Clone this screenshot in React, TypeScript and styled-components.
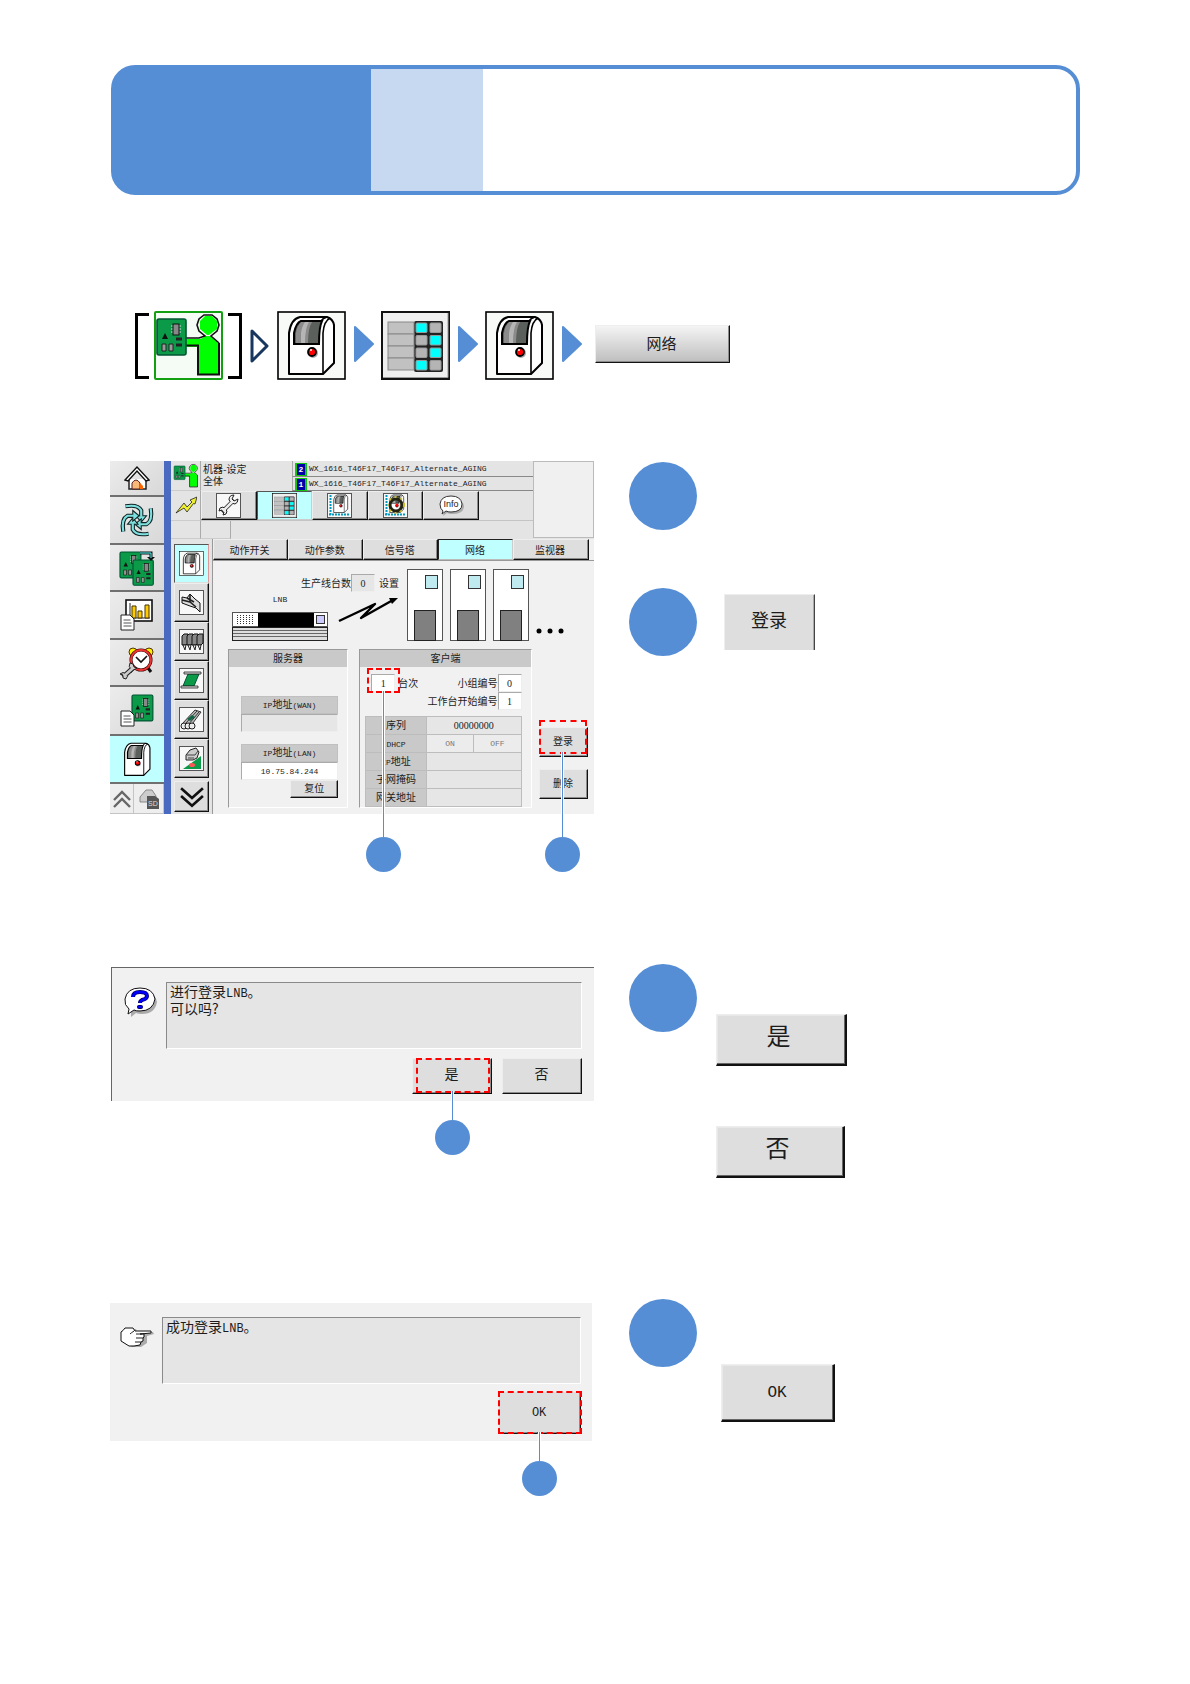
import React from "react";
import styled, { createGlobalStyle, css } from "styled-components";

const blue = "#558ed5";
const cjk = `"Noto Sans CJK SC", sans-serif`;
const mono = `"Liberation Mono", "Noto Sans CJK SC", monospace`;
const serif = `"Liberation Serif", "Noto Sans CJK SC", serif`;

const GlobalStyle = createGlobalStyle`
  *, *::before, *::after { box-sizing: border-box; }
  body { margin: 0; background: #fff; color: #1c1c1c; font-family: ${cjk}; }
  button, input { font: inherit; color: inherit; margin: 0; }
  svg { display: block; flex: none; }
`;

/* ---------- page ---------- */

const Page = styled.main`
  padding: 65px 110px 180px;
`;

const Banner = styled.header`
  display: grid;
  grid-template-columns: 16fr 7fr 37fr;
  height: 130px;
  margin-left: 1px;
  overflow: hidden;
  border: 4px solid ${blue};
  border-radius: 24px;
  background: linear-gradient(to right, ${blue} 20%, #fff 20%) border-box;
`;
const BannerPart = styled.div<{ $color: string }>`
  background: ${(p) => p.$color};
`;

const Path = styled.nav`
  display: flex;
  align-items: center;
  gap: 7px;
  margin-top: 116px;
  padding-left: 25px;
`;
const Bracketed = styled.div`
  display: flex;
  align-items: center;
  gap: 5px;
`;
const Bracket = styled.span<{ $close?: boolean }>`
  width: 14px;
  height: 66px;
  border: 3px solid #000;
  ${(p) => (p.$close ? "border-left: 0;" : "border-right: 0;")}
`;

const Section = styled.section<{ $gap: number }>`
  display: grid;
  grid-template-columns: minmax(0, 15fr) minmax(0, 14fr);
  align-items: start;
  column-gap: 35px;
  margin-top: ${(p) => p.$gap}px;
`;
const Steps = styled.ol`
  display: flex;
  flex-direction: column;
  gap: 57px;
  margin: 0;
  padding: 1px 0 0;
  list-style: none;
`;
const Step = styled.li<{ $gap?: number }>`
  display: flex;
  align-items: flex-start;
  gap: ${(p) => p.$gap ?? 18}px;
`;
const Disc = styled.span`
  flex: none;
  width: 68px;
  height: 68px;
  margin: 0 1px 1px 0;
  border-radius: 50%;
  background: ${blue};
`;
const Choices = styled.div<{ $top: number }>`
  display: flex;
  flex-direction: column;
  align-items: flex-start;
  gap: 60px;
  padding-top: ${(p) => p.$top}px;
`;

/* ---------- buttons ---------- */

const bevel = css`
  display: flex;
  align-items: center;
  justify-content: center;
  padding: 0;
  background: #dedede;
  border: 1px solid;
  border-color: #eee #111 #111 #eee;
  box-shadow: inset -1px -1px #8c8c8c;
  cursor: pointer;
`;

const PathButton = styled.button`
  ${bevel}
  width: 135px;
  height: 38px;
  margin: 0 0 4px 6px;
  padding: 0 2px 2px 0;
  font-size: 15px;
  background: linear-gradient(#f4f4f4, #bebebe);
`;

const BigButton = styled.button<{ $w: number; $h: number; $mono?: boolean }>`
  ${bevel}
  width: ${(p) => p.$w}px;
  height: ${(p) => p.$h}px;
  border-width: 1px 2px 2px 1px;
  box-shadow: inset -1px -1px #666, inset 1px 1px #e8e8e8;
  padding: 0 4px 10px 0;
  font-size: 24px;
  ${(p) => p.$mono && `font-family: ${mono}; font-size: 16px; padding: 0;`}
`;
const FlatButton = styled.button`
  ${bevel}
  width: 91px;
  height: 56px;
  padding-bottom: 8px;
  border-width: 1px 1px 0 1px;
  border-color: #eee #444 #444 #eee;
  box-shadow: inset -1px 0 #aaa;
  font-size: 18px;
`;

/* ---------- callouts ---------- */

const Frame = styled.span<{ $inset: string }>`
  position: absolute;
  inset: ${(p) => p.$inset};
  z-index: 2;
  border: 2px dashed #f00;
  pointer-events: none;
`;
const Stem = styled.span<{ $length: number }>`
  position: absolute;
  top: 100%;
  left: calc(50% - 1px);
  width: 1px;
  height: ${(p) => p.$length}px;
  background: ${blue};
  box-shadow: 1px 0 #fff, -1px 0 #fff;

  &::after {
    content: "";
    position: absolute;
    top: 100%;
    left: -17px;
    width: 35px;
    height: 35px;
    border-radius: 50%;
    background: ${blue};
  }
`;
const Anchor = styled.div`
  position: relative;
`;

function Callout({ inset, length }: { inset: string; length: number }) {
  return (
    <Frame $inset={inset}>
      <Stem $length={length} />
    </Frame>
  );
}

/* ---------- machine screen ---------- */

const Screen = styled.figure`
  display: grid;
  grid-template-columns: 54px 7px minmax(0, 1fr);
  margin: 0;
  background: #e4e4e4;
  font-size: 10px;
  line-height: 12px;
`;
const Stripe = styled.div`
  background: #4a69c0;
`;
const MainNav = styled.nav`
  display: grid;
  grid-template-rows: 36px 48px 47px 48px 47px 49px 48px 30px;
`;
const NavButton = styled.button<{ $active?: boolean }>`
  display: flex;
  align-items: center;
  justify-content: center;
  padding: 0;
  border: 0;
  border-bottom: 2px solid #707070;
  background: ${(p) => (p.$active ? "#bfffff" : "linear-gradient(135deg, #ececec, #d8d8d8)")};
`;
const NavFoot = styled.div`
  display: grid;
  grid-template-columns: 24px 1fr;
`;
const FootButton = styled.button`
  display: flex;
  align-items: center;
  justify-content: center;
  padding: 0;
  border: 1px solid #c4c4c4;
  border-width: 0 1px 1px 0;
  background: #eee;
`;

const Body = styled.div`
  display: flex;
  flex-direction: column;
`;
const Top = styled.div`
  display: flex;
  height: 78px;
`;
const TopMain = styled.div`
  flex: 1;
  display: grid;
  grid-template-rows: 30px 30px 18px;
`;
const Preview = styled.div`
  width: 61px;
  height: 77px;
  border: 1px solid #bbb;
  background: #f0f0f0;
`;
const TopRow = styled.div`
  display: flex;
`;
const Cell = styled.div`
  display: flex;
  align-items: center;
  justify-content: center;
  width: 30px;
  border-right: 1px solid #aaa;
  border-bottom: 1px solid #ccc;
`;
const Title = styled.div`
  width: 91px;
  padding: 2px 0 0 2px;
`;
const Programs = styled.div`
  flex: 1;
  display: grid;
  grid-template-rows: 16px 14px;
  font-family: ${mono};
  font-size: 8px;
`;
const Program = styled.div`
  display: flex;
  align-items: center;
  gap: 2px;
  padding: 1px 0 0 2px;
  border-bottom: 1px solid #888;
  border-left: 1px solid #aaa;
`;
const Badge = styled.span`
  width: 12px;
  height: 13px;
  border: 2px solid #13c613;
  border-width: 1px 2px;
  background: #0000a8;
  color: #fff;
  font-weight: bold;
  line-height: 11px;
  text-align: center;
`;
const Tools = styled.div`
  flex: 1;
  display: grid;
  grid-template-columns: repeat(5, minmax(0, 56fr)) 54fr;
  border-bottom: 1px solid #c4c4c4;
`;
const ToolButton = styled.button<{ $active?: boolean }>`
  ${bevel}
  ${(p) => p.$active && "background: #bfffff; box-shadow: none; border-color: #555 #ccc #ccc #555;"}
`;

const Lower = styled.div`
  flex: 1;
  display: flex;
`;
const SubNav = styled.nav`
  display: grid;
  grid-template-rows: repeat(6, 39px) 31px;
  width: 42px;
  padding: 5px 3px 2px;
  border-right: 1px solid #999;

  & > :last-child { margin-top: 3px; height: 31px; }
`;
const SubButton = styled.button<{ $active?: boolean }>`
  ${bevel}
  ${(p) => p.$active && "background: #bfffff; box-shadow: none; border-color: #555 #d99 #ddd #555;"}
`;
const Content = styled.div`
  flex: 1;
  display: flex;
  flex-direction: column;
  background: #f1f1f1;
`;
const Tabs = styled.div`
  display: grid;
  grid-template-columns: repeat(5, minmax(0, 15fr)) 1fr;
  height: 22px;
  border-bottom: 1px solid #999;
`;
const Tab = styled.button<{ $active?: boolean }>`
  ${bevel}
  padding-right: 2px;
  ${(p) => p.$active && "background: #bfffff; box-shadow: none; border-color: #222 #ccc #bbb #222;"}
`;
const Panel = styled.div`
  padding: 8px 6px 6px 15px;
`;
const Overview = styled.div`
  display: flex;
  height: 72px;
`;
const Line = styled.div`
  display: flex;
  flex-direction: column;
  width: 179px;
  padding-top: 5px;
`;
const Count = styled.div`
  display: flex;
  align-items: center;
  justify-content: flex-end;
  padding-right: 8px;
`;
const Suffix = styled.span`
  margin-left: 4px;
`;
const Small = styled.span`
  font-family: ${mono};
  font-size: 8px;
  line-height: 8px;
`;
const Digits = styled.span`
  font-family: ${serif};
  font-size: 10px;
  line-height: 8px;
`;
const Link = styled.div`
  display: flex;
  gap: 10px;
  padding: 2px 0 0 4px;
`;
const Server = styled.div`
  display: flex;
  flex-direction: column;
  align-items: center;
  gap: 8px;
  padding-top: 2px;
`;
const Machines = styled.div`
  display: flex;
  align-items: flex-end;
  gap: 7px;
`;

const Field = styled.input<{ $muted?: boolean; $wide?: boolean }>`
  display: block;
  width: 24px;
  height: 18px;
  padding: 0;
  border: 1px solid;
  border-color: #aaa #eee #eee #aaa;
  border-radius: 0;
  background: ${(p) => (p.$muted ? "#e6e6e6" : "#fff")};
  font-family: ${serif};
  font-size: 10px;
  text-align: center;
  ${(p) => p.$wide && `width: 100%; font-family: ${mono}; font-size: 8px;`}
`;

const Panels = styled.div`
  display: flex;
  margin-top: 8px;
`;
const Group = styled.section<{ $grow: number; $gap: number }>`
  flex: ${(p) => p.$grow} 1 0;
  height: 159px;
  margin-right: ${(p) => p.$gap}px;
  border: 1px solid;
  border-color: #999 #fff #fff #999;
`;
const GroupTitle = styled.h2`
  margin: 0;
  height: 17px;
  background: #c9c9c9;
  font-size: 10px;
  font-weight: normal;
  line-height: 16px;
  text-align: center;
`;
const ServerBody = styled.div`
  display: flex;
  flex-direction: column;
  gap: 12px;
  padding: 29px 9px 0 12px;
`;
const Address = styled.label`
  display: block;
`;
const AddressTitle = styled.span`
  display: block;
  height: 18px;
  border: 1px solid #c0c0c0;
  background: #c9c9c9;
  line-height: 14px;
  text-align: center;
`;
const ResetRow = styled.div`
  display: flex;
  justify-content: flex-end;
  margin-top: -12px;
`;
const SmallButton = styled.button<{ $w: number; $h: number }>`
  ${bevel}
  width: ${(p) => p.$w}px;
  height: ${(p) => p.$h}px;
  padding-bottom: 2px;
`;
const ClientBody = styled.div`
  padding: 7px 9px 0 5px;
`;
const FieldRow = styled.div`
  display: flex;
  align-items: center;
  justify-content: flex-end;
`;
const Unit = styled.label`
  flex: 1;
  display: flex;
  align-items: center;
  gap: 3px;
  padding-left: 6px;
`;
const Named = styled.label`
  display: flex;
  align-items: center;
`;
const Table = styled.table`
  width: 100%;
  margin-top: 6px;
  border-collapse: collapse;
  table-layout: fixed;

  th, td {
    height: 18px;
    padding: 0 0 2px;
    border: 1px solid #bdbdbd;
    font-weight: normal;
    line-height: 12px;
    text-align: center;
  }
  th { width: 39%; background: #c9c9c9; }
  td { background: #e6e6e6; }
`;
const SwitchCell = styled.td`
  && { padding: 0; }
`;
const Switch = styled.button`
  display: block;
  width: 100%;
  height: 17px;
  padding: 0;
  border: 0;
  background: #ececec;
  color: #777;
  font-family: ${mono};
  font-size: 8px;
`;
const Actions = styled.div`
  display: flex;
  flex-direction: column;
  gap: 12px;
  padding-top: 78px;
`;

/* ---------- dialogs ---------- */

const Dialog = styled.figure<{ $edge?: boolean }>`
  display: grid;
  grid-template-columns: 32px minmax(0, 1fr);
  column-gap: 10px;
  margin: ${(p) => (p.$edge ? "4px 0 0 1px" : "5px 2px 0 0")};
  padding: ${(p) => (p.$edge ? "14px 12px 7px" : "14px 11px 7px 10px")};
  background: #f1f1f1;
  ${(p) => p.$edge && "border: 1px solid #666; border-width: 1px 0 0 1px;"}
`;
const Glyph = styled.div<{ $top: number }>`
  padding-top: ${(p) => p.$top}px;
`;
const Message = styled.p`
  height: 67px;
  margin: 0;
  padding: 0 0 0 3px;
  border: 1px solid;
  border-color: #8a8a8a #fff #fff #8a8a8a;
  background: #e5e5e5;
  font-size: 14px;
  line-height: 17px;
`;
const Latin = styled.span`
  font-family: ${mono};
  font-size: 12px;
  line-height: 8px;
`;
const Answers = styled.div<{ $top: number }>`
  grid-column: 2;
  display: flex;
  justify-content: flex-end;
  gap: 10px;
  padding-top: ${(p) => p.$top}px;
`;
const Answer = styled.button<{ $w: number; $h: number; $mono?: boolean }>`
  ${bevel}
  width: ${(p) => p.$w}px;
  height: ${(p) => p.$h}px;
  padding-bottom: 6px;
  font-size: 14px;
  line-height: 16px;
  ${(p) => p.$mono && `font-family: ${mono}; font-size: 12px; padding: 0;`}
`;

/* ---------- drawings ---------- */

const Svg = ({ w, h = w, box, children }: { w: number; h?: number; box?: string; children: React.ReactNode }) => (
  <svg width={w} height={h} viewBox={box ?? `0 0 ${w} ${h}`} aria-hidden="true">
    {children}
  </svg>
);

const Pcb = ({ x, y, s = 1 }: { x: number; y: number; s?: number }) => (
  <g transform={`translate(${x} ${y}) scale(${s})`}>
    <rect x="0" y="0" width="29" height="36" rx="2" fill="#0a9a48" stroke="#053" strokeWidth="1.6" />
    <path d="M14 7h10M14 10h10M14 13h10" stroke="#ddd" />
    <rect x="16" y="5" width="6" height="11" fill="#888" stroke="#111" />
    <path d="M5 20l3-6 3 6z" fill="#111" />
    <path d="M19 20h6M19 26h6" stroke="#222" strokeWidth="3" />
    <path d="M5 25h4v7H5zM12 25h4v7h-4z" fill="#999" stroke="#222" />
  </g>
);

const Person = ({ size, bare }: { size: number; bare?: boolean }) => (
  <Svg w={size} box="0 0 69 69">
    {!bare && <rect x="1" y="1" width="67" height="67" rx="1" fill="#f5fbf5" stroke="#12a012" strokeWidth="2" />}
    <path d="M32 28H46L52 25H56L64 32V63H45V36H32Z" fill="#0f0" />
    <path d="M32 34.500h12V63.500h21V32" fill="none" stroke="#111" strokeWidth="2" />
    <path d="M32 27h13l6-2-6-5-2-6 2-6 5-4h8l5 4 2 6-2 6-6 5 8 7" fill="none" stroke="#111" strokeWidth="1.600" />
    <path d="M51 5h7l5 5v8l-8 6h-2l-7-6v-8z" fill="#0f0" />
    <Pcb x={3} y={8} />
  </Svg>
);

const MachineShape = () => (
  <>
    <path d="M12 63V22Q14 8 23 6H50Q56 8 57 14V52L46 63Z" fill="#fff" stroke="#000" strokeWidth="2" strokeLinejoin="round" />
    <path d="M46 63V22Q47 10 53 7M44 10Q46 7 50 6" fill="none" stroke="#000" strokeWidth="1.6" />
    <path d="M17 33V22Q19 12 24 10H45Q42 16 42 33Z" fill="#5c605c" stroke="#000" strokeWidth="2" />
    <path d="M19 32V22Q20 15 24 11H35Q31 17 31 32Z" fill="#8b8b8b" />
    <path d="M24 32V22Q25 15 28 11H32Q28 17 28 32Z" fill="#b5b5b5" />
    <circle cx="36" cy="42" r="5" fill="#aaa" />
    <circle cx="35" cy="41" r="4" fill="#f00" stroke="#000" strokeWidth="1.8" />
    <circle cx="34" cy="39" r="1" fill="#fff" />
  </>
);
const Machine = ({ size, bare }: { size: number; bare?: boolean }) => (
  <Svg w={size} box={bare ? "6 2 56 64" : "0 0 69 69"}>
    {!bare && <rect x="1" y="1" width="67" height="67" fill="#f7faf7" stroke="#000" strokeWidth="1.6" />}
    <MachineShape />
  </Svg>
);

const ListIcon = ({ size }: { size: number }) => (
  <Svg w={size} box="0 0 69 69">
    <rect x="1" y="1" width="67" height="67" fill="#eee" stroke="#111" strokeWidth="2" />
    <path d="M2 66.500h65V2" fill="none" stroke="#999" />
    <rect x="33" y="10" width="29" height="51" rx="2" fill="#222" />
    {[0, 1, 2, 3].map((r) => (
      <g key={r}>
        <rect x="7" y={11 + r * 12} width="26" height="12" fill="#c1c1c1" stroke="#888" />
        {[0, 1].map((c) => (
          <rect
            key={c}
            x={35 + c * 14}
            y={12 + r * 12.500}
            width="11"
            height="9.500"
            rx="1"
            fill={(r === 0 || r === 3) === (c === 0) ? "#0ff" : "#b4b4b4"}
            stroke="#999"
          />
        ))}
      </g>
    ))}
  </Svg>
);

const Next = ({ hollow }: { hollow?: boolean }) => (
  <Svg w={21} h={42}>
    {hollow ? (
      <path d="M3 6V36L18 21Z" fill="#fff" stroke="#17375e" strokeWidth="3" strokeLinejoin="round" />
    ) : (
      <path d="M2 2V36L20 19Z" fill={blue} stroke={blue} strokeWidth="2" strokeLinejoin="round" />
    )}
  </Svg>
);

const Home = () => (
  <Svg w={26}>
    <path d="M5 14V24H22V14" fill="#fff" stroke="#222" strokeWidth="1.500" />
    <path d="M1 15L13 2L25 15L22 16L13 6L4 16Z" fill="#fff" stroke="#111" strokeWidth="1.400" />
    <path d="M8 24V18Q12 12 16 18V24Z" fill="#f8b878" stroke="#522" />
    <path d="M16 24V18l3 3v3z" fill="#f60" />
  </Svg>
);

const Swirl = () => (
  <Svg w={38} box="0 0 36 36">
    {[0, 90, 180, 270].map((a) => (
      <g key={a} transform={`rotate(${a} 18 18)`}>
        <path d="M7 5Q19 3 22 9V15" fill="none" stroke="#122" strokeWidth="4" />
        <path d="M17 14h10l-5 6z" fill="#7fe0e0" stroke="#122" />
        <path d="M7 5Q19 3 22 9V15" fill="none" stroke="#7fe0e0" strokeWidth="2" />
      </g>
    ))}
  </Svg>
);

const Boards = () => (
  <Svg w={36}>
    <Pcb x={1} y={2} s={0.72} />
    <Pcb x={14} y={10} s={0.7} />
    <path d="M21 3H32V8" fill="none" stroke="#111" strokeWidth="3" />
    <path d="M28 7h8l-4 4z" fill="#111" />
    <path d="M21 3H32V8" fill="none" stroke="#5ff" />
  </Svg>
);

const Sheet = ({ x, y }: { x: number; y: number }) => (
  <g transform={`translate(${x} ${y})`}>
    <path d="M0 0H9L13 4V15H0Z" fill="#fff" stroke="#222" />
    <path d="M2.500 5h7M2.500 8h8M2.500 11h8" stroke="#555" />
  </g>
);
const Report = () => (
  <Svg w={34}>
    <rect x="6" y="2" width="26" height="21" fill="#fff" stroke="#111" strokeWidth="1.600" />
    <path d="M10 5V20H30" fill="none" stroke="#222" />
    <path d="M12 8h4v12h-4zM18 13h4v7h-4zM25 7h4v13h-4z" fill="#fc0" stroke="#430" />
    <Sheet x={1} y={17} />
  </Svg>
);
const Clock = () => (
  <Svg w={34}>
    <circle cx="13" cy="6" r="4" fill="#fe0" stroke="#530" />
    <circle cx="29" cy="6" r="4" fill="#fe0" stroke="#530" />
    <path d="M13 22l-3 4M28 22l3 4" stroke="#111" strokeWidth="3" />
    <circle cx="21" cy="14" r="10" fill="#fff" stroke="#300" strokeWidth="3" />
    <circle cx="21" cy="14" r="10" fill="none" stroke="#e33" strokeWidth="1.800" />
    <path d="M16 11l5 5 6-6" fill="none" stroke="#111" strokeWidth="1.600" />
    <path d="M3 31L13 22" stroke="#222" strokeWidth="5" />
    <path d="M10 17q-2 4 1 6t6-1l-3-1-1-3zM6 28q-3-3-6 0l3 1v3l3 1q3-3 0-5z" fill="#ccc" stroke="#222" />
    <path d="M4 30L13 22" stroke="#ccc" strokeWidth="2.600" />
  </Svg>
);
const BoardSheet = () => (
  <Svg w={34}>
    <Pcb x={12} y={1} s={0.72} />
    <Sheet x={1} y={17} />
  </Svg>
);
const Chevrons = ({ down, color, size }: { down?: boolean; color: string; size: number }) => (
  <Svg w={size} box="0 0 22 22">
    <path
      d={down ? "M1 3L11 12L21 3M1 10L11 19L21 10" : "M3 12L11 4L19 12M3 19L11 11L19 19"}
      fill="none"
      stroke={color}
      strokeWidth="2.400"
    />
  </Svg>
);
const SdCard = () => (
  <Svg w={22}>
    <path d="M2 9L8 2h6l4 6v6H2z" fill="#ccc" stroke="#888" />
    <path d="M9 8h8l4 3v10H9z" fill="#555" />
    <text x="10" y="18" fontFamily="Liberation Sans, sans-serif" fontSize="7" fill="#ddd">SD</text>
  </Svg>
);
const Bolt = () => (
  <Svg w={22}>
    <path d="M1 18L9 8L12 12L17 7L15 5L22 2L20 9L18.500 8.500L12 17L9 13Z" fill="#ee3" stroke="#222" strokeWidth=".8" />
  </Svg>
);

const Tile = ({ children }: { children: React.ReactNode }) => (
  <Svg w={25}>
    <rect x=".5" y=".5" width="24" height="24" fill="#f8f8f8" stroke="#555" />
    {children}
  </Svg>
);
const Wrench = () => (
  <Tile>
    <path d="M6 19L18 7" stroke="#222" strokeWidth="4" />
    <path d="M22 6l-4 2-2-2 2-4q-5 0-5 5 2 4 6 4 3-1 3-5zM3 18q0-4 4-4l4 4q0 4-4 4l1-3-2-2z" fill="#eee" stroke="#222" />
    <path d="M7 18L17 8" stroke="#eee" strokeWidth="2.500" />
  </Tile>
);
const Scale = ({ gear }: { gear?: boolean }) => (
  <Tile>
    <path d="M3.500 2v20M2 21.500h21" stroke="#09b" strokeWidth="2" strokeDasharray="2 1" />
    <g transform="translate(3 0) scale(.31)"><MachineShape /></g>
    {gear && (
      <>
        <circle cx="13" cy="12" r="6" fill="none" stroke="#221" strokeWidth="3" />
        <circle cx="13" cy="12" r="8" fill="none" stroke="#cb2" strokeWidth="2" strokeDasharray="2 4" />
        <circle cx="14" cy="12" r="1.500" fill="#f00" />
      </>
    )}
  </Tile>
);
const Info = () => (
  <Svg w={25}>
    <path d="M4 19q-3-2-3-7Q2 4 12 4t12 8q0 8-12 8-3 0-5-1l-4 3z" fill="#aaa" transform="translate(1 1)" />
    <path d="M4 18q-3-2-3-7Q2 3 12 3t11 8q0 8-11 8-3 0-5-1l-4 3z" fill="#fff" stroke="#333" />
    <text x="12" y="14" textAnchor="middle" fontFamily="Liberation Sans, sans-serif" fontSize="9" fill="#222">Info</text>
  </Svg>
);
const Nozzle = () => (
  <Tile>
    <path d="M3 7l5 1 3-4 5 5 5 4v9l-4-4-6-2-8-3V9z" fill="#ddd" stroke="#111" />
    <path d="M3 10l8 2 6 5M11 4v8M8 8l7 4" fill="none" stroke="#222" strokeWidth="1.600" />
  </Tile>
);
const Feeders = () => (
  <Tile>
    {[0, 1, 2, 3].map((i) => (
      <g key={i} transform={`translate(${i * 5} 0)`}>
        <path d="M3 7l2-2h4v9l-2 2H3z" fill="#888" stroke="#111" />
        <path d="M4 16h3l-1 5z" fill="#fff" stroke="#222" />
      </g>
    ))}
  </Tile>
);
const Belt = () => (
  <Tile>
    <path d="M9 6H20L15 18H4Z" fill="#0a9a48" stroke="#053" />
    <path d="M5 4h17v2H5zM2 18h17v2H2z" fill="#ddd" stroke="#222" strokeWidth=".8" />
  </Tile>
);
const Reels = () => (
  <Tile>
    <path d="M3 17L16 3l6 2L11 20z" fill="#bbb" stroke="#333" />
    <path d="M6 17L18 4M9 18L20 5" stroke="#333" />
    <path d="M8 12l5-4 3 2-5 4z" fill="#164" />
    {[5, 9, 13].map((x) => <circle key={x} cx={x} cy="19" r="3" fill="#eee" stroke="#222" />)}
  </Tile>
);
const Camera = () => (
  <Tile>
    <path d="M4 23L22 10V23Z" fill="#0a9a48" />
    <path d="M7 9l4-5 6-2 3 4-2 6-4 2H7z" fill="#ccc" stroke="#222" />
    <path d="M8 9h8l3-4M9 12h6" fill="none" stroke="#444" />
    <ellipse cx="13" cy="19" rx="3" ry="2" fill="#f55" />
  </Tile>
);

const Rack = () => (
  <Svg w={96} h={29}>
    <rect x=".5" y=".5" width="95" height="14" fill="#fff" stroke="#555" />
    {[3, 5, 7, 9, 11].map((y) => <path key={y} d={`M5 ${y + 0.5}H22`} stroke="#333" strokeDasharray="1 2" />)}
    <rect x="26" y="1" width="56" height="14" fill="#000" />
    <rect x="84.500" y="3.500" width="8" height="8" fill="#ccf" stroke="#333" />
    <rect x=".5" y="15.500" width="95" height="13" fill="#ddd" stroke="#222" />
    <path d="M1 18.500h94M1 21.500h94M1 24.500h94" stroke="#666" />
  </Svg>
);
const Zigzag = () => (
  <Svg w={60} h={29}>
    <path d="M1 27L37 10L23 24L55 6" fill="none" stroke="#000" strokeWidth="2.400" strokeLinejoin="round" />
    <path d="M51 4h9l-6 6z" />
  </Svg>
);
const Mounter = () => (
  <Svg w={36} h={72}>
    <rect x=".5" y=".5" width="35" height="71" fill="#fff" stroke="#555" />
    <rect x="18.500" y="6.500" width="12" height="13" fill="#bfebf0" stroke="#333" />
    <rect x="7.500" y="41.500" width="21" height="30" fill="#808080" stroke="#222" />
  </Svg>
);
const Dots = () => (
  <Svg w={28} h={24}>
    {[3, 14, 25].map((x) => <circle key={x} cx={x} cy="14" r="2.500" />)}
  </Svg>
);
const Question = () => (
  <Svg w={33}>
    <path d="M6 25Q2 21 2 15 4 4 17 4t15 11q-2 12-15 12-4 0-6-1l-5 4z" fill="#aaa" transform="translate(1 2)" />
    <path d="M5 24Q0 20 1 14 3 3 16 3t15 11q-2 12-15 12-4 0-6-1l-6 4z" fill="#fff" stroke="#111" />
    <path d="M9 12q0-5 7-5t7 4q0 3-5 4-2 1-2 3" fill="none" stroke="#006" strokeWidth="4" />
    <path d="M9 12q0-5 7-5t7 4q0 3-5 4-2 1-2 3" fill="none" stroke="#00f" strokeWidth="2.400" />
    <rect x="13.500" y="20.500" width="5" height="3" rx="1" fill="#00f" stroke="#006" />
  </Svg>
);
const Hand = () => (
  <Svg w={34} h={24}>
    <path d="M4 8l6-4h6l1 3h16l1 2-7 2v7l-6 4H12l-8-4z" fill="#aaa" />
    <path d="M1 7q2-1 4-4h8l2 3h16v2l-11 1h4v3l-1 1v3l-2 1-1 3-6 1H9L1 16z" fill="#fff" stroke="#111" strokeLinejoin="round" />
    <path d="M16 9h6M16 13h7M15 17h6M14 6q-3 2-4 3" fill="none" stroke="#222" />
  </Svg>
);

/* ---------- content ---------- */

const mainNav = [
  { name: "home", icon: <Home /> },
  { name: "cycle", icon: <Swirl /> },
  { name: "boards", icon: <Boards /> },
  { name: "report", icon: <Report /> },
  { name: "maintenance", icon: <Clock /> },
  { name: "board data", icon: <BoardSheet /> },
  { name: "machine", icon: <Machine size={36} bare />, active: true },
];
const tools = [
  { name: "wrench", icon: <Wrench /> },
  { name: "list", icon: <ListIcon size={25} />, active: true },
  { name: "scale", icon: <Scale /> },
  { name: "calibration", icon: <Scale gear /> },
  { name: "info", icon: <Info /> },
];
const subNav = [
  { name: "machine", icon: <Machine size={25} />, active: true },
  { name: "nozzle", icon: <Nozzle /> },
  { name: "feeders", icon: <Feeders /> },
  { name: "belt", icon: <Belt /> },
  { name: "reels", icon: <Reels /> },
  { name: "camera", icon: <Camera /> },
  { name: "more", icon: <Chevrons down color="#111" size={24} /> },
];
const tabs = ["动作开关", "动作参数", "信号塔", "网络", "监视器"];

function MachineScreen() {
  return (
    <Screen>
      <MainNav>
        {mainNav.map((n) => (
          <NavButton key={n.name} aria-label={n.name} $active={n.active}>{n.icon}</NavButton>
        ))}
        <NavFoot>
          <FootButton aria-label="up"><Chevrons color="#666" size={22} /></FootButton>
          <FootButton aria-label="card"><SdCard /></FootButton>
        </NavFoot>
      </MainNav>
      <Stripe />
      <Body>
        <Top>
          <TopMain>
            <TopRow>
              <Cell><Person size={26} bare /></Cell>
              <Title>机器-设定<br />全体</Title>
              <Programs>
                <Program><Badge>2</Badge>WX_1616_T46F17_T46F17_Alternate_AGING</Program>
                <Program><Badge>1</Badge>WX_1616_T46F17_T46F17_Alternate_AGING</Program>
              </Programs>
            </TopRow>
            <TopRow>
              <Cell><Bolt /></Cell>
              <Tools>
                {tools.map((t) => (
                  <ToolButton key={t.name} aria-label={t.name} $active={t.active}>{t.icon}</ToolButton>
                ))}
              </Tools>
            </TopRow>
            <TopRow><Cell /><Cell /></TopRow>
          </TopMain>
          <Preview />
        </Top>
        <Lower>
          <SubNav>
            {subNav.map((n) => (
              <SubButton key={n.name} aria-label={n.name} $active={n.active}>{n.icon}</SubButton>
            ))}
          </SubNav>
          <Content>
            <Tabs>
              {tabs.map((t) => <Tab key={t} $active={t === "网络"}>{t}</Tab>)}
            </Tabs>
            <Panel>
              <Overview>
                <Line>
                  <Count>
                    <Named>生产线台数<Field $muted defaultValue="0" /></Named>
                    <Suffix>设置</Suffix>
                  </Count>
                  <Link>
                    <Server><Small>LNB</Small><Rack /></Server>
                    <Zigzag />
                  </Link>
                </Line>
                <Machines><Mounter /><Mounter /><Mounter /><Dots /></Machines>
              </Overview>
              <Panels>
                <Group $grow={120} $gap={11}>
                  <GroupTitle>服务器</GroupTitle>
                  <ServerBody>
                    <Address>
                      <AddressTitle><Small>IP</Small>地址<Small>(WAN)</Small></AddressTitle>
                      <Field $wide $muted defaultValue="" />
                    </Address>
                    <Address>
                      <AddressTitle><Small>IP</Small>地址<Small>(LAN)</Small></AddressTitle>
                      <Field $wide defaultValue="10.75.84.244" />
                    </Address>
                    <ResetRow><SmallButton $w={48} $h={18}>复位</SmallButton></ResetRow>
                  </ServerBody>
                </Group>
                <Group $grow={173} $gap={7}>
                  <GroupTitle>客户端</GroupTitle>
                  <ClientBody>
                    <FieldRow>
                      <Unit>
                        <Anchor>
                          <Field defaultValue="1" />
                          <Callout inset="-6px -5px -1px -4px" length={146} />
                        </Anchor>
                        台次
                      </Unit>
                      <Named>小组编号<Field defaultValue="0" /></Named>
                    </FieldRow>
                    <FieldRow>
                      <Named>工作台开始编号<Field defaultValue="1" /></Named>
                    </FieldRow>
                    <Table>
                      <tbody>
                        <tr><th scope="row">序列</th><td colSpan={2}><Digits>00000000</Digits></td></tr>
                        <tr>
                          <th scope="row"><Small>DHCP</Small></th>
                          <SwitchCell><Switch>ON</Switch></SwitchCell>
                          <SwitchCell><Switch>OFF</Switch></SwitchCell>
                        </tr>
                        <tr><th scope="row"><Small>IP</Small>地址</th><td colSpan={2} /></tr>
                        <tr><th scope="row">子网掩码</th><td colSpan={2} /></tr>
                        <tr><th scope="row">网关地址</th><td colSpan={2} /></tr>
                      </tbody>
                    </Table>
                  </ClientBody>
                </Group>
                <Actions>
                  <Anchor>
                    <SmallButton $w={49} $h={30}>登录</SmallButton>
                    <Callout inset="-7px 1px 3px 0" length={85} />
                  </Anchor>
                  <SmallButton $w={49} $h={30}>删除</SmallButton>
                </Actions>
              </Panels>
            </Panel>
          </Content>
        </Lower>
      </Body>
    </Screen>
  );
}

export default function App() {
  return (
    <>
      <GlobalStyle />
      <Page lang="zh-CN">
        <Banner>
          <BannerPart $color={blue} />
          <BannerPart $color="#c6d9f1" />
        </Banner>

        <Path>
          <Bracketed>
            <Bracket />
            <Person size={69} />
            <Bracket $close />
          </Bracketed>
          <Next hollow />
          <Machine size={69} />
          <Next />
          <ListIcon size={69} />
          <Next />
          <Machine size={69} />
          <Next />
          <PathButton>网络</PathButton>
        </Path>

        <Section $gap={81}>
          <MachineScreen />
          <Steps>
            <Step><Disc /></Step>
            <Step $gap={26}>
              <Disc />
              <Choices $top={6}><FlatButton>登录</FlatButton></Choices>
            </Step>
          </Steps>
        </Section>

        <Section $gap={149}>
          <Dialog $edge>
            <Glyph $top={3}><Question /></Glyph>
            <Message>进行登录<Latin>LNB</Latin>。<br />可以吗?</Message>
            <Answers $top={9}>
              <Anchor>
                <Answer $w={80} $h={36}>是</Answer>
                <Callout inset="0 2px 1px 4px" length={29} />
              </Anchor>
              <Answer $w={80} $h={36}>否</Answer>
            </Answers>
          </Dialog>
          <Steps>
            <Step>
              <Disc />
              <Choices $top={50}>
                <BigButton $w={131} $h={52}>是</BigButton>
                <BigButton $w={129} $h={52}>否</BigButton>
              </Choices>
            </Step>
          </Steps>
        </Section>

        <Section $gap={120}>
          <Dialog>
            <Glyph $top={8}><Hand /></Glyph>
            <Message>成功登录<Latin>LNB</Latin>。</Message>
            <Answers $top={7}>
              <Anchor>
                <Answer $w={83} $h={43} $mono>OK</Answer>
                <Callout inset="0 -1px 0 0" length={29} />
              </Anchor>
            </Answers>
          </Dialog>
          <Steps>
            <Step $gap={23}>
              <Disc />
              <Choices $top={65}><BigButton $w={114} $h={58} $mono>OK</BigButton></Choices>
            </Step>
          </Steps>
        </Section>
      </Page>
    </>
  );
}
